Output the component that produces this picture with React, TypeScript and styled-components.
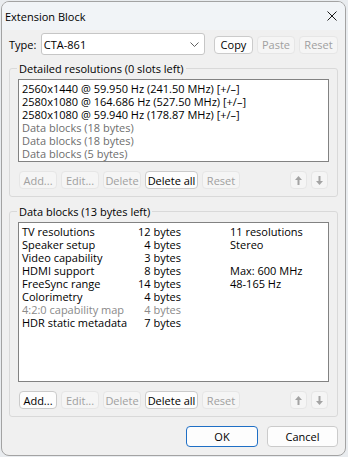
import React from "react";
import styled, { createGlobalStyle } from "styled-components";

const GlobalStyle = createGlobalStyle`
  html, body { margin: 0; padding: 0; background: #e9ecef; }
  body { font-family: "Open Sans", "Noto Sans", sans-serif; font-size: 11px; color: #000; }
  * { box-sizing: border-box; }
`;

const Window = styled.div`
  margin: 1px 0 0 1px;
  width: 345px;
  height: 455px;
  border: 1px solid #a3a3a3;
  border-radius: 8px;
  background: #f0f0f0;
  overflow: hidden;
  display: flex;
  flex-direction: column;
`;

const TitleBar = styled.div`
  height: 28px;
  background: #f1f4f7;
  display: flex;
  align-items: center;
  justify-content: space-between;
  padding: 0 8px 0 3px;
`;

const Title = styled.span`
  font-size: 11px;
  line-height: 15px;
`;

const Close = styled.span`
  display: flex;
  width: 10px;
  height: 10px;
`;

const Body = styled.div`
  flex: 1;
  display: flex;
  flex-direction: column;
  padding: 0 7px;
`;

const TypeRow = styled.div`
  margin-top: 3px;
  height: 22px;
  display: flex;
  align-items: center;
`;

const Label = styled.span`
  width: 32px;
  line-height: 15px;
`;

const Combo = styled.div`
  width: 165px;
  height: 22px;
  background: #fff;
  border: 1px solid #c6c6c6;
  border-radius: 3px;
  display: flex;
  align-items: center;
  justify-content: space-between;
  padding: 0 5px 0 2px;
  margin-right: 9px;
`;

const Button = styled.div<{ $w: number; $h?: number; $disabled?: boolean; $primary?: boolean }>`
  width: ${(p) => p.$w}px;
  height: ${(p) => p.$h ?? 18}px;
  flex: none;
  display: flex;
  align-items: center;
  justify-content: center;
  border-radius: 4px;
  line-height: 15px;
  background: ${(p) => (p.$disabled ? "#f5f5f5" : "#fdfdfd")};
  border: 1px solid ${(p) => (p.$primary ? "#1f6fc5" : p.$disabled ? "#e6e6e6" : "#cbcbcb")};
  color: ${(p) => (p.$disabled ? "#a0a0a0" : "#000")};
`;

const TopButtons = styled.div`
  display: flex;
  gap: 4px;
  margin-top: 1px;
`;

const Group = styled.fieldset<{ $gap: number }>`
  margin: ${(p) => p.$gap}px 0 0 0;
  padding: 0 8px 7px 8px;
  border: 1px solid #d9d9d9;
  border-radius: 3px;
  min-width: 0;
`;

const Legend = styled.legend`
  padding: 0 2px;
  margin-left: -1px;
  line-height: 15px;
`;

const List = styled.div<{ $h: number }>`
  margin-top: 3px;
  height: ${(p) => p.$h}px;
  background: #fff;
  border: 1px solid #828282;
  padding: 2px 3px;
  display: flex;
  flex-direction: column;
`;

const ListItem = styled.div<{ $dim?: boolean }>`
  height: 13px;
  line-height: 13px;
  white-space: nowrap;
  color: ${(p) => (p.$dim ? "#6e6e6e" : "#000")};
`;

const DataRow = styled.div<{ $dim?: boolean }>`
  display: grid;
  grid-template-columns: 112px 47px 1fr;
  height: 13px;
  line-height: 13px;
  white-space: nowrap;
  color: ${(p) => (p.$dim ? "#8a8a8a" : "#000")};
`;

const Bytes = styled.span`
  text-align: right;
`;

const Info = styled.span`
  padding-left: 49px;
`;

const ButtonRow = styled.div`
  margin-top: 9px;
  display: flex;
  gap: 4px;
  padding: 0 1px;
`;

const Spacer = styled.div`
  flex: 1;
`;

const Footer = styled.div`
  margin-top: 9px;
  display: flex;
  justify-content: flex-end;
  gap: 9px;
`;

const ArrowIcon = ({ down }: { down?: boolean }) => (
  <svg width="7" height="9" viewBox="0 0 7 9" style={{ transform: down ? "rotate(180deg)" : undefined }}>
    <path d="M3.5 0 L7 4 H4.5 V9 H2.5 V4 H0 Z" fill="#a3a3a3" />
  </svg>
);

const ListButtons = ({ canAdd }: { canAdd?: boolean }) => (
  <ButtonRow>
    <Button $w={38} $disabled={!canAdd}>Add...</Button>
    <Button $w={38} $disabled>Edit...</Button>
    <Button $w={38} $disabled>Delete</Button>
    <Button $w={53}>Delete all</Button>
    <Button $w={38} $disabled>Reset</Button>
    <Spacer />
    <Button $w={17} $disabled><ArrowIcon /></Button>
    <Button $w={17} $disabled><ArrowIcon down /></Button>
  </ButtonRow>
);

const resolutions = [
  { t: "2560x1440 @ 59.950 Hz (241.50 MHz) [+/–]" },
  { t: "2580x1080 @ 164.686 Hz (527.50 MHz) [+/–]" },
  { t: "2580x1080 @ 59.940 Hz (178.87 MHz) [+/–]" },
  { t: "Data blocks (18 bytes)", dim: true },
  { t: "Data blocks (18 bytes)", dim: true },
  { t: "Data blocks (5 bytes)", dim: true },
];

const blocks = [
  { n: "TV resolutions", b: "12 bytes", i: "11 resolutions" },
  { n: "Speaker setup", b: "4 bytes", i: "Stereo" },
  { n: "Video capability", b: "3 bytes", i: "" },
  { n: "HDMI support", b: "8 bytes", i: "Max: 600 MHz" },
  { n: "FreeSync range", b: "14 bytes", i: "48-165 Hz" },
  { n: "Colorimetry", b: "4 bytes", i: "" },
  { n: "4:2:0 capability map", b: "4 bytes", i: "", dim: true },
  { n: "HDR static metadata", b: "7 bytes", i: "" },
];

export default function App() {
  return (
    <>
      <GlobalStyle />
      <Window>
        <TitleBar>
          <Title>Extension Block</Title>
          <Close>
            <svg width="10" height="10" viewBox="0 0 10 10">
              <path d="M0.5 0.5 L9.5 9.5 M9.5 0.5 L0.5 9.5" stroke="#1a1a1a" strokeWidth="1" />
            </svg>
          </Close>
        </TitleBar>
        <Body>
          <TypeRow>
            <Label>Type:</Label>
            <Combo>
              <span>CTA-861</span>
              <svg width="9" height="5" viewBox="0 0 9 5">
                <path d="M0.5 0.5 L4.5 4.5 L8.5 0.5" stroke="#606060" strokeWidth="1" fill="none" />
              </svg>
            </Combo>
            <TopButtons>
              <Button $w={39}>Copy</Button>
              <Button $w={38} $disabled>Paste</Button>
              <Button $w={39} $disabled>Reset</Button>
            </TopButtons>
          </TypeRow>

          <Group $gap={6}>
            <Legend>Detailed resolutions (0 slots left)</Legend>
            <List $h={83}>
              {resolutions.map((r, k) => (
                <ListItem key={k} $dim={r.dim}>{r.t}</ListItem>
              ))}
            </List>
            <ListButtons />
          </Group>

          <Group $gap={7}>
            <Legend>Data blocks (13 bytes left)</Legend>
            <List $h={160}>
              {blocks.map((b, k) => (
                <DataRow key={k} $dim={b.dim}>
                  <span>{b.n}</span>
                  <Bytes>{b.b}</Bytes>
                  <Info>{b.i}</Info>
                </DataRow>
              ))}
            </List>
            <ListButtons canAdd />
          </Group>

          <Footer>
            <Button $w={72} $h={21} $primary>OK</Button>
            <Button $w={71} $h={21}>Cancel</Button>
          </Footer>
        </Body>
      </Window>
    </>
  );
}
